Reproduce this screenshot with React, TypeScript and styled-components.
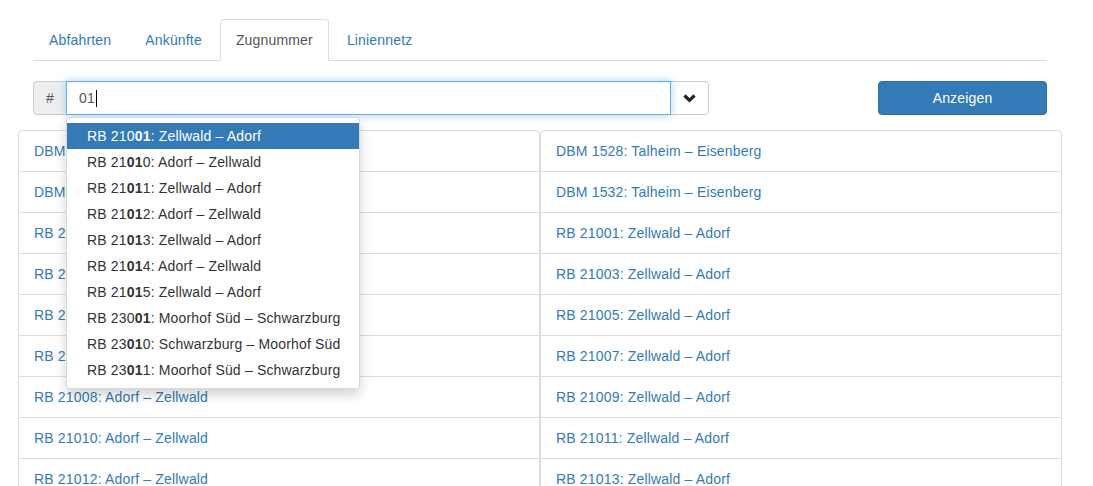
import React from "react";
import styled, { createGlobalStyle } from "styled-components";

const GlobalStyle = createGlobalStyle`
  html, body {
    margin: 0;
    padding: 0;
    overflow: hidden;
    background: #fff;
  }
  body {
    font-family: "Liberation Sans", Arial, Helvetica, sans-serif;
    font-size: 14px;
    line-height: 20px;
    letter-spacing: 0.17px;
    color: #333;
  }
  * { box-sizing: border-box; }
`;

const Page = styled.div`
  width: 1014px;
  margin-left: 33px;
  padding-top: 19px;
`;

const Tabs = styled.ul`
  display: flex;
  list-style: none;
  margin: 0;
  padding: 0;
  border-bottom: 1px solid #ddd;
`;

const TabItem = styled.li`
  margin-bottom: -1px;
`;

const TabLink = styled.a<{ $active?: boolean }>`
  display: block;
  margin-right: 2px;
  padding: 10px 15px;
  line-height: 20px;
  border: 1px solid ${(p) => (p.$active ? "#ddd" : "transparent")};
  border-bottom-color: ${(p) => (p.$active ? "#fff" : "transparent")};
  border-radius: 4px 4px 0 0;
  background: ${(p) => (p.$active ? "#fff" : "transparent")};
  color: ${(p) => (p.$active ? "#555" : "#337ab7")};
  text-decoration: none;
  cursor: pointer;
`;

const FormRow = styled.div`
  display: flex;
  align-items: flex-start;
  margin-top: 20px;
`;

const InputGroup = styled.div`
  display: flex;
  width: 676px;
  height: 34px;
`;

const Addon = styled.span`
  display: flex;
  align-items: center;
  justify-content: center;
  width: 33px;
  height: 34px;
  background: #eee;
  border: 1px solid #ccc;
  border-right: 0;
  border-radius: 4px 0 0 4px;
  color: #555;
`;

const InputWrap = styled.div`
  position: relative;
  flex: 1;
`;

const FakeInput = styled.div`
  display: flex;
  align-items: center;
  height: 34px;
  padding: 6px 12px;
  border: 1px solid #66afe9;
  color: #555;
  background: #fff;
  box-shadow: inset 0 1px 1px rgba(0, 0, 0, 0.075), 0 0 8px rgba(102, 175, 233, 0.6);
  position: relative;
  z-index: 2;
`;

const Caret = styled.span`
  display: inline-block;
  width: 1px;
  height: 17px;
  background: #000;
  margin-left: 1px;
`;

const ToggleButton = styled.button`
  display: flex;
  align-items: center;
  justify-content: center;
  width: 39px;
  height: 34px;
  margin-left: -1px;
  padding: 0;
  background: #fff;
  border: 1px solid #ccc;
  border-radius: 0 4px 4px 0;
  cursor: pointer;
`;

const PrimaryButton = styled.button`
  margin-left: auto;
  width: 169px;
  height: 34px;
  background: #337ab7;
  border: 1px solid #2e6da4;
  border-radius: 4px;
  color: #fff;
  font-family: inherit;
  font-size: 14px;
  letter-spacing: 0.17px;
  cursor: pointer;
`;

const Menu = styled.ul`
  position: absolute;
  top: 36px;
  left: 0;
  width: 294px;
  margin: 0;
  padding: 5px 0;
  list-style: none;
  background: #fff;
  border: 1px solid rgba(0, 0, 0, 0.15);
  border-radius: 4px;
  box-shadow: 0 6px 12px rgba(0, 0, 0, 0.175);
  z-index: 10;
`;

const MenuItem = styled.li<{ $active?: boolean }>`
  padding: 3px 20px;
  line-height: 20px;
  white-space: nowrap;
  background: ${(p) => (p.$active ? "#337ab7" : "transparent")};
  color: ${(p) => (p.$active ? "#fff" : "#333")};
`;

const Lists = styled.div`
  display: grid;
  grid-template-columns: 522px 522px;
  margin-top: 15px;
  margin-left: -15px;
`;

const ListGroup = styled.div`
  display: flex;
  flex-direction: column;
`;

const ListItem = styled.a`
  display: block;
  padding: 10px 15px;
  margin-bottom: -1px;
  border: 1px solid #ddd;
  color: #337ab7;
  text-decoration: none;
  line-height: 20px;
  &:first-child {
    border-radius: 4px 4px 0 0;
  }
`;

const Chevron = () => (
  <svg width="13" height="10" viewBox="0 0 13 10" aria-hidden="true">
    <polyline
      points="1.5,2.5 6.5,7.3 11.5,2.5"
      fill="none"
      stroke="#222"
      strokeWidth="3.2"
      strokeLinecap="butt"
      strokeLinejoin="miter"
    />
  </svg>
);

const tabs = ["Abfahrten", "Ankünfte", "Zugnummer", "Liniennetz"];

const suggestions: [string, string][] = [
  ["21001", "Zellwald – Adorf"],
  ["21010", "Adorf – Zellwald"],
  ["21011", "Zellwald – Adorf"],
  ["21012", "Adorf – Zellwald"],
  ["21013", "Zellwald – Adorf"],
  ["21014", "Adorf – Zellwald"],
  ["21015", "Zellwald – Adorf"],
  ["23001", "Moorhof Süd – Schwarzburg"],
  ["23010", "Schwarzburg – Moorhof Süd"],
  ["23011", "Moorhof Süd – Schwarzburg"],
];

const leftList = [
  "DBM 1527: Eisenberg – Talheim",
  "DBM 1531: Eisenberg – Talheim",
  "RB 21000: Adorf – Zellwald",
  "RB 21002: Adorf – Zellwald",
  "RB 21004: Adorf – Zellwald",
  "RB 21006: Adorf – Zellwald",
  "RB 21008: Adorf – Zellwald",
  "RB 21010: Adorf – Zellwald",
  "RB 21012: Adorf – Zellwald",
];

const rightList = [
  "DBM 1528: Talheim – Eisenberg",
  "DBM 1532: Talheim – Eisenberg",
  "RB 21001: Zellwald – Adorf",
  "RB 21003: Zellwald – Adorf",
  "RB 21005: Zellwald – Adorf",
  "RB 21007: Zellwald – Adorf",
  "RB 21009: Zellwald – Adorf",
  "RB 21011: Zellwald – Adorf",
  "RB 21013: Zellwald – Adorf",
];

const Highlight = ({ num, query }: { num: string; query: string }) => {
  const i = num.indexOf(query);
  if (i < 0) return <>{num}</>;
  return (
    <>
      {num.slice(0, i)}
      <b>{num.slice(i, i + query.length)}</b>
      {num.slice(i + query.length)}
    </>
  );
};

export default function App() {
  const query = "01";
  return (
    <>
      <GlobalStyle />
      <Page>
        <Tabs>
          {tabs.map((t) => (
            <TabItem key={t}>
              <TabLink $active={t === "Zugnummer"}>{t}</TabLink>
            </TabItem>
          ))}
        </Tabs>
        <FormRow>
          <InputGroup>
            <Addon>#</Addon>
            <InputWrap>
              <FakeInput>
                {query}
                <Caret />
              </FakeInput>
              <Menu>
                {suggestions.map(([num, route], idx) => (
                  <MenuItem key={num} $active={idx === 0}>
                    RB <Highlight num={num} query={query} />: {route}
                  </MenuItem>
                ))}
              </Menu>
            </InputWrap>
            <ToggleButton>
              <Chevron />
            </ToggleButton>
          </InputGroup>
          <PrimaryButton>Anzeigen</PrimaryButton>
        </FormRow>
        <Lists>
          <ListGroup>
            {leftList.map((t) => (
              <ListItem key={t}>{t}</ListItem>
            ))}
          </ListGroup>
          <ListGroup>
            {rightList.map((t) => (
              <ListItem key={t}>{t}</ListItem>
            ))}
          </ListGroup>
        </Lists>
      </Page>
    </>
  );
}
